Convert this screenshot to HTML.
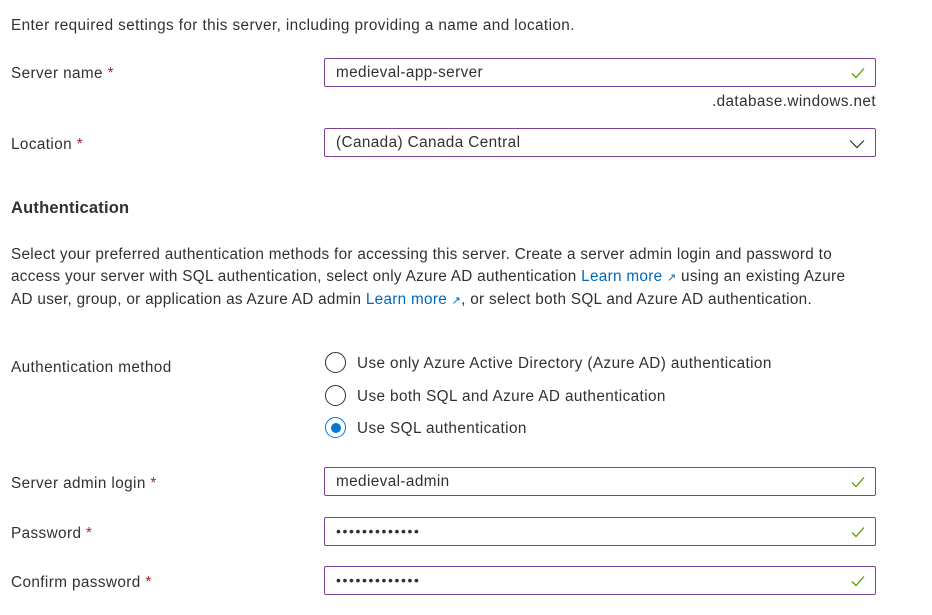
<!DOCTYPE html>
<html><head><style>
body{margin:0;width:932px;height:615px;background:#fff;font-family:"Liberation Sans",sans-serif;font-size:15.3px;letter-spacing:0.4px;color:#323130;position:relative;overflow:hidden}
.a{position:absolute;white-space:nowrap}
.req{color:#a4262c}
.inp{position:absolute;left:324px;width:550px;height:27px;border:1px solid #7b4196;border-radius:2px;box-sizing:content-box}
.inp span{position:absolute;left:11px;top:5px}
.chk{position:absolute;right:10px;top:8px}
.radio{position:absolute;left:325px;width:19px;height:19px;border:1px solid #323130;border-radius:50%}
.radio.on{border-color:#0078d4}
.radio.on::after{content:"";position:absolute;left:4.5px;top:4.5px;width:10px;height:10px;border-radius:50%;background:#0078d4}
a{color:#0067b8;text-decoration:none}
.dots{letter-spacing:1.6px;font-size:14px}
.ext{font-size:11px}
</style></head><body>
<div class="a" style="left:11px;top:17px">Enter required settings for this server, including providing a name and location.</div>
<div class="a" style="left:11px;top:65px">Server name <span class="req">*</span></div>
<div class="inp" style="top:58px"><span>medieval-app-server</span><svg class="chk" width="14" height="12" viewBox="0 0 14 12"><path d="M1 6.5l4 4L13 1.5" fill="none" stroke="#57a300" stroke-width="1.3"/></svg></div>
<div class="a" style="right:56px;top:93px">.database.windows.net</div>
<div class="a" style="left:11px;top:136px">Location <span class="req">*</span></div>
<div class="inp" style="top:128px"><span>(Canada) Canada Central</span><svg class="chk" width="16" height="10" viewBox="0 0 16 10" style="top:10px"><path d="M1 1.5l7 7 7-7" fill="none" stroke="#323130" stroke-width="1.2"/></svg></div>
<div class="a" style="left:11px;top:199px;font-weight:bold;font-size:16.5px;letter-spacing:0.2px">Authentication</div>
<div class="a" style="left:11px;top:244px;line-height:22px;letter-spacing:0.3px">Select your preferred authentication methods for accessing this server. Create a server admin login and password to<br>access your server with SQL authentication, select only Azure AD authentication <a>Learn more <span class="ext">↗</span></a> using an existing Azure<br>AD user, group, or application as Azure AD admin <a>Learn more <span class="ext">↗</span></a>, or select both SQL and Azure AD authentication.</div>
<div class="a" style="left:11px;top:359px">Authentication method</div>
<div class="radio" style="top:352px"></div><div class="a" style="left:357px;top:355px">Use only Azure Active Directory (Azure AD) authentication</div>
<div class="radio" style="top:385px"></div><div class="a" style="left:357px;top:388px">Use both SQL and Azure AD authentication</div>
<div class="radio on" style="top:417px"></div><div class="a" style="left:357px;top:420px">Use SQL authentication</div>
<div class="a" style="left:11px;top:475px">Server admin login <span class="req">*</span></div>
<div class="inp" style="top:467px"><span>medieval-admin</span><svg class="chk" width="14" height="12" viewBox="0 0 14 12"><path d="M1 6.5l4 4L13 1.5" fill="none" stroke="#57a300" stroke-width="1.3"/></svg></div>
<div class="a" style="left:11px;top:525px">Password <span class="req">*</span></div>
<div class="inp" style="top:517px"><span class="dots">•••••••••••••</span><svg class="chk" width="14" height="12" viewBox="0 0 14 12"><path d="M1 6.5l4 4L13 1.5" fill="none" stroke="#57a300" stroke-width="1.3"/></svg></div>
<div class="a" style="left:11px;top:574px">Confirm password <span class="req">*</span></div>
<div class="inp" style="top:566px"><span class="dots">•••••••••••••</span><svg class="chk" width="14" height="12" viewBox="0 0 14 12"><path d="M1 6.5l4 4L13 1.5" fill="none" stroke="#57a300" stroke-width="1.3"/></svg></div>
</body></html>
